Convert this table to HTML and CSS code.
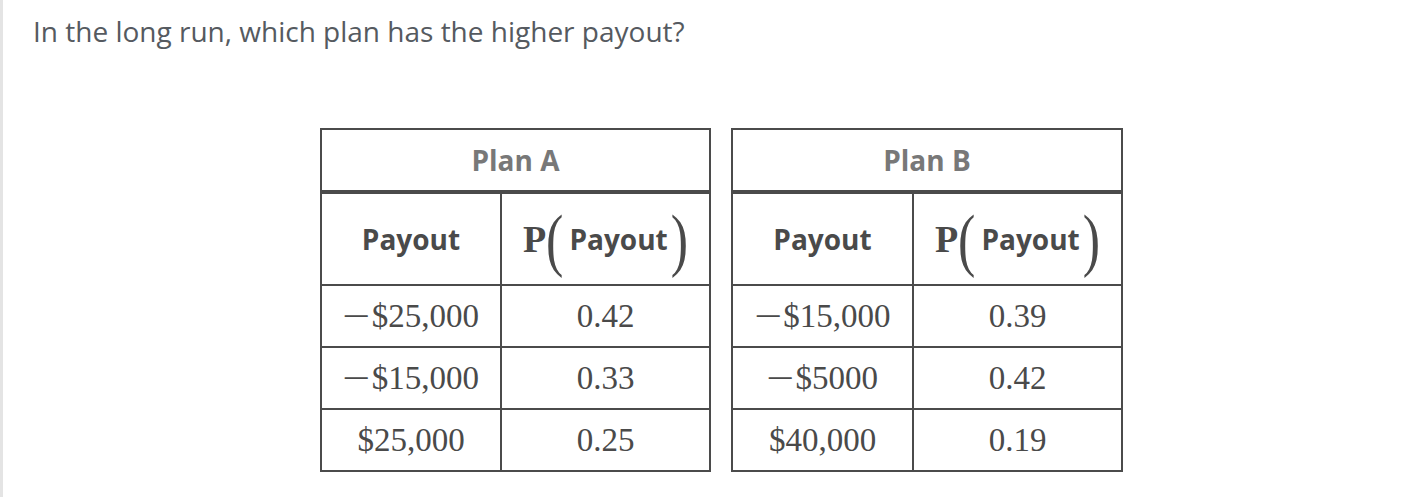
FILE: index.html
```html
<!DOCTYPE html>
<html lang="en">
<head>
<meta charset="utf-8">
<title>Plan payouts</title>
<link rel="stylesheet" href="styles.css">
</head>
<body>
<main class="page">
  <p class="question">In the long run, which plan has the higher payout?</p>
  <div class="plans">
    <div class="plan plan-a">
      <div class="cell head">Plan A</div>
      <div class="cell sub">Payout</div>
      <div class="cell sub"><span class="prob">P</span><span class="paren">(</span><span class="arg">Payout</span><span class="paren">)</span></div>
      <div class="cell num"><span class="minus">−</span>$25,000</div>
      <div class="cell num">0.42</div>
      <div class="cell num"><span class="minus">−</span>$15,000</div>
      <div class="cell num">0.33</div>
      <div class="cell num">$25,000</div>
      <div class="cell num">0.25</div>
    </div>
    <div class="plan plan-b">
      <div class="cell head">Plan B</div>
      <div class="cell sub">Payout</div>
      <div class="cell sub"><span class="prob">P</span><span class="paren">(</span><span class="arg">Payout</span><span class="paren">)</span></div>
      <div class="cell num"><span class="minus">−</span>$15,000</div>
      <div class="cell num">0.39</div>
      <div class="cell num"><span class="minus">−</span>$5000</div>
      <div class="cell num">0.42</div>
      <div class="cell num">$40,000</div>
      <div class="cell num">0.19</div>
    </div>
  </div>
</main>
</body>
</html>
```

FILE: styles.css
```css
html, body {
  margin: 0;
  padding: 0;
  background: #fff;
}

.page {
  min-height: 497px;
  box-sizing: border-box;
  border-left: 3px solid #e4e4e4;
  font-family: "Open Sans", "Liberation Sans", sans-serif;
}

.question {
  margin: 0;
  padding: 12px 0 0 30px;
  font-size: 28px;
  line-height: 38px;
  color: #555a60;
}

.plans {
  display: flex;
  gap: 20px;
  padding-left: 317px;
  margin-top: 78px;
}

.plan {
  display: grid;
  grid-template-rows: 62px 90px 60px 60px 60px;
  gap: 2px;
  padding: 2px;
  background: #4b4b4b;
}

.plan-a { grid-template-columns: 178px 207px; }
.plan-b { grid-template-columns: 179px 207px; }

.cell {
  background: #fff;
  display: flex;
  align-items: center;
  justify-content: center;
}

.head {
  grid-column: 1 / span 2;
  margin-bottom: 2px;
  font-weight: 700;
  font-size: 28px;
  color: #787878;
}

.sub {
  font-weight: 700;
  font-size: 28px;
  color: #4a4a4a;
}

.prob {
  font-family: "Liberation Serif", serif;
  font-weight: 700;
  font-size: 38px;
  color: #4a4a4a;
}

.paren {
  font-family: "Liberation Serif", serif;
  font-weight: 400;
  font-size: 52px;
  color: #4a4a4a;
  display: inline-block;
  transform: scaleY(1.35);
}

.arg {
  margin: 0 3px 0 6px;
}

.num {
  font-family: "Liberation Serif", serif;
  font-size: 33px;
  color: #4a4a4a;
}

.minus {
  display: inline-block;
  transform: scaleX(1.5);
  margin: 0 6px 0 4px;
}
```
